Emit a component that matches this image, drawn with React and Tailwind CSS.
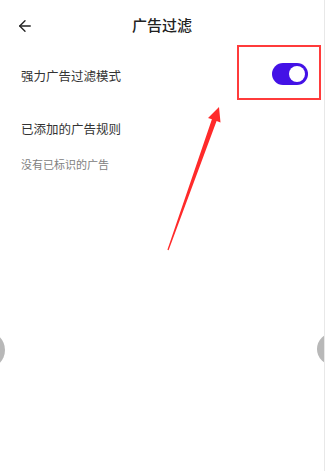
import { ArrowLeft } from 'lucide-react';

const font = { fontFamily: '"Noto Sans CJK SC", "Noto Sans", sans-serif' };

const Toggle = ({ on }) => (
  <div
    className={`w-[36px] h-[22px] rounded-full flex items-center px-[3px] ${
      on ? 'bg-[#4311e6] justify-end' : 'bg-gray-300 justify-start'
    }`}
  >
    <div className="w-[16px] h-[16px] rounded-full bg-white" />
  </div>
);

const App = () => {
  return (
    <div
      className="relative w-[325px] h-[471px] overflow-hidden bg-white border-r border-[#e8e8e8]"
      style={font}
    >
      {/* Header */}
      <div className="h-[50px] grid grid-cols-[60px_1fr_60px] items-center">
        <button className="justify-self-start ml-[14px] mt-[1px] p-0.5 text-[#222]">
          <ArrowLeft size={18} strokeWidth={1.8} />
        </button>
        <h1 className="text-center text-[15px] font-medium text-[#222]">广告过滤</h1>
        <div />
      </div>

      {/* 强力模式 */}
      <div className="h-[48px] flex items-center justify-between pl-[21px] pr-4">
        <span className="text-[12.5px] text-[#333] mt-[4px]">强力广告过滤模式</span>
        <Toggle on />
      </div>

      {/* 规则 */}
      <div className="px-[21px] pt-[21px]">
        <p className="text-[12.5px] leading-[20px] text-[#333]">已添加的广告规则</p>
        <p className="mt-[17px] text-[11px] leading-[16px] text-[#808080]">没有已标识的广告</p>
      </div>

      {/* 标注框 */}
      <div className="absolute left-[237px] top-[45px] w-[84px] h-[55px] border-2 border-[#ff3b3b]" />

      {/* 标注箭头 */}
      <svg className="absolute inset-0 pointer-events-none" width="325" height="471" viewBox="0 0 325 471">
        <polygon
          points="219,107 220.5,122.5 216.6,121 168.6,250.2 167.4,249.8 211.9,119.3 208,118"
          fill="#ff2a2a"
        />
      </svg>

      {/* 左右翻页按钮 */}
      <div className="absolute left-[-33px] top-[331px] w-[38px] h-[38px] rounded-full bg-[#b8b8b8]" />
      <div className="absolute left-[317px] top-[333px] w-[32px] h-[32px] rounded-full bg-[#b8b8b8]" />
    </div>
  );
};

export default App;
